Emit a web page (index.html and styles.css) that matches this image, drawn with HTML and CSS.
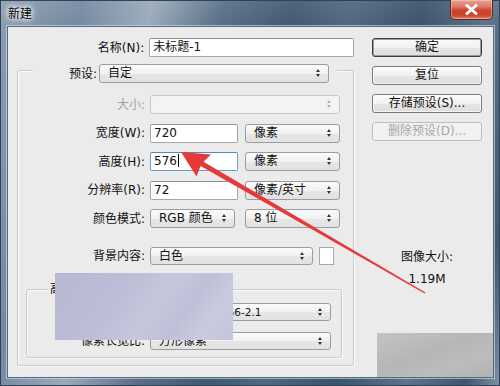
FILE: index.html
```html
<!DOCTYPE html>
<html lang="zh-CN">
<head>
<meta charset="utf-8">
<title>新建</title>
<link rel="stylesheet" href="styles.css">
</head>
<body>
<div class="window">
  <div class="titlebar">
    <span class="title">新建</span>
    <div class="close">
      <svg width="13" height="11" viewBox="0 0 13 11"><path d="M2 1.5 L11 9.5 M11 1.5 L2 9.5" stroke="#fff" stroke-width="3" stroke-linecap="round"/></svg>
    </div>
  </div>
  <div class="client">
    <div class="left">
      <div class="row name-row">
        <span class="lbl">名称(N):</span>
        <div class="input w-name">未标题-1</div>
      </div>
      <div class="group">
        <div class="legend">
          <span class="lbl lbl-legend">预设:</span>
          <div class="select w-preset">自定</div>
        </div>
        <div class="rows">
          <div class="row">
            <span class="lbl disabled">大小:</span>
            <div class="select is-disabled w-size"></div>
          </div>
          <div class="row">
            <span class="lbl">宽度(W):</span>
            <div class="input w-num">720</div>
            <div class="select w-unit">像素</div>
          </div>
          <div class="row">
            <span class="lbl">高度(H):</span>
            <div class="input w-num focused">576<span class="caret"></span></div>
            <div class="select w-unit">像素</div>
          </div>
          <div class="row">
            <span class="lbl">分辨率(R):</span>
            <div class="input w-num">72</div>
            <div class="select w-unit">像素/英寸</div>
          </div>
          <div class="row">
            <span class="lbl">颜色模式:</span>
            <div class="select w-mode">RGB 颜色</div>
            <div class="select w-unit">8 位</div>
          </div>
          <div class="row row-bg">
            <span class="lbl">背景内容:</span>
            <div class="select w-bg">白色</div>
            <div class="swatch"></div>
          </div>
        </div>
        <div class="subgroup">
          <div class="sublegend">高级</div>
          <div class="subrows">
            <div class="row row-sub">
              <span class="lbl lbl-sub">颜色配置文件:</span>
              <div class="select w-sub narrow">sRGB IEC61966-2.1</div>
            </div>
            <div class="row row-sub">
              <span class="lbl lbl-sub">像素长宽比:</span>
              <div class="select w-sub">方形像素</div>
            </div>
          </div>
        </div>
      </div>
    </div>
    <div class="right">
      <div class="btn default">确定</div>
      <div class="btn">复位</div>
      <div class="btn">存储预设(S)...</div>
      <div class="btn is-disabled">删除预设(D)...</div>
      <div class="info">
        <div>图像大小:</div>
        <div class="info-val">1.19M</div>
      </div>
    </div>
    <div class="blur blur-a"></div>
    <div class="blur blur-b"></div>
  </div>
  <svg class="arrow" width="500" height="386" viewBox="0 0 500 386">
    <polygon fill="#e63a3a" points="181,152 211,154.5 203.5,161.8 425.4,292.4 424.6,293.6 200.6,165.9 196.5,176.5"/>
  </svg>
</div>
</body>
</html>
```
FILE: styles.css
```css
* { box-sizing: border-box; margin: 0; padding: 0; }
html, body { width: 500px; height: 386px; overflow: hidden; }
body {
  font-family: "DejaVu Sans", "Noto Sans CJK SC", sans-serif;
  font-size: 12px;
  color: #111;
  background: #3b526b;
}
.window {
  position: relative;
  width: 500px;
  height: 386px;
  display: flex;
  flex-direction: column;
  background:
    linear-gradient(180deg, rgba(255,255,255,0.08) 0px, rgba(255,255,255,0) 27px),
    linear-gradient(103deg, #8d9fb1 0%, #7488a0 14%, #9aabbb 26%, #596f87 38%, #41596f 50%, #4f6880 60%, #3a526b 72%, #5d738a 84%, #3f566f 94%, #7f92a6 100%);
  box-shadow: inset 0 0 0 1px #2f4258;
}
.titlebar {
  height: 27px;
  display: flex;
  justify-content: space-between;
  align-items: flex-start;
  padding: 0 7px 0 8px;
}
.title {
  margin-top: 5px;
  font-family: "Noto Sans CJK SC", sans-serif;
  font-size: 12px;
  line-height: 16px;
  color: #000;
  text-shadow: 0 0 4px #fff, 0 0 6px #fff, 0 0 8px rgba(255,255,255,0.9);
}
.close {
  width: 43px;
  height: 20px;
  display: flex;
  align-items: center;
  justify-content: center;
  border: 1px solid #5a2a22;
  border-top: none;
  border-radius: 0 0 5px 5px;
  background: linear-gradient(180deg, #e9a292 0%, #dc7a66 35%, #c8432d 55%, #c9452f 80%, #e0806a 100%);
  box-shadow: inset 0 0 0 1px rgba(255,220,210,0.45);
}
.client {
  flex: 1;
  margin: 0 7px 9px 8px;
  position: relative;
  display: flex;
  background: #ebebeb;
  box-shadow: 0 0 0 1px #566a80, 0 0 0 2px rgba(220,228,236,0.6);
}
.left { width: 346px; padding-top: 11px; }
.row { display: flex; align-items: center; height: 19px; }
.lbl {
  width: 137px;
  margin-right: 5px;
  text-align: right;
  white-space: nowrap;
  line-height: 16px;
}
.disabled { color: #a3a3a3; }
.input {
  height: 19px;
  line-height: 17px;
  padding-left: 3px;
  background: #fff;
  border: 1px solid #a5a7ad;
  border-top-color: #8e9096;
  border-radius: 2px;
  white-space: nowrap;
}
.input.focused { border-color: #6d9ccd; border-top-color: #5a87b8; }
.caret { display: inline-block; width: 1px; height: 13px; margin-left: 1px; background: #000; vertical-align: -2px; }
.w-name { width: 206px; }
.select {
  position: relative;
  height: 19px;
  line-height: 17px;
  padding-left: 8px;
  border: 1px solid #9c9c9c;
  border-radius: 3px;
  background: linear-gradient(180deg, #fbfbfb 0%, #f1f1f1 50%, #e6e6e6 51%, #e2e2e2 100%);
  white-space: nowrap;
  overflow: hidden;
}
.select::before, .select::after {
  content: "";
  position: absolute;
  right: 8px;
  width: 0; height: 0;
  border-left: 2.5px solid transparent;
  border-right: 2.5px solid transparent;
}
.select::before { top: 4px; border-bottom: 3.5px solid #333; }
.select::after { top: 9px; border-top: 3.5px solid #333; }
.select.is-disabled { background: #f3f3f3; border-color: #c6c6c6; }
.select.is-disabled::before { border-bottom-color: #b0b0b0; }
.select.is-disabled::after { border-top-color: #b0b0b0; }
.group {
  margin: 13px 0 0 9px;
  width: 337px;
  height: 296px;
  border: 1px solid #cbcbcb;
  border-radius: 3px;
  box-shadow: inset 1px 1px 0 #fafafa, 1px 1px 0 #fafafa;
}
.legend {
  display: flex;
  align-items: center;
  width: fit-content;
  margin: -7px 0 0 15px;
  padding-right: 8px;
  background: #ebebeb;
}
.lbl-legend { width: 64px; margin-right: 2px; }
.w-preset { width: 230px; }
.rows {
  margin-top: 12px;
  display: flex;
  flex-direction: column;
  gap: 9.5px;
}
.rows .lbl { width: 127px; }
.w-size { width: 190px; }
.w-num { width: 88px; margin-right: 7px; }
.w-unit { width: 95px; }
.w-mode { width: 85px; margin-right: 10px; }
.row-bg { margin-top: 9px; height: 18px; }
.w-bg { width: 163px; height: 18px; }
.swatch { width: 15px; height: 18px; margin-left: 6px; background: #fff; border: 1px solid #a9a9a9; }
.subgroup {
  margin: 24px 0 0 8px;
  width: 316px;
  height: 69px;
  border: 1px solid #cbcbcb;
  border-radius: 3px;
  box-shadow: inset 1px 1px 0 #fafafa, 1px 1px 0 #fafafa;
}
.sublegend {
  width: fit-content;
  margin: -8px 0 0 21px;
  padding: 0 2px;
  line-height: 15px;
  background: #ebebeb;
}
.subrows { margin-top: 6px; display: flex; flex-direction: column; gap: 11px; }
.row-sub { height: 18px; }
.lbl-sub { width: 118px !important; }
.w-sub { width: 181px; height: 18px; }
.narrow { font-size: 10.5px; }
.right {
  width: 110px;
  margin-left: 18px;
  padding-top: 11px;
  display: flex;
  flex-direction: column;
  gap: 9px;
}
.btn {
  height: 19px;
  line-height: 17px;
  text-align: center;
  white-space: nowrap;
  border: 1px solid #7a7a7a;
  border-radius: 3px;
  background: linear-gradient(180deg, #fbfbfb 0%, #f1f1f1 50%, #e5e5e5 51%, #dedede 100%);
  box-shadow: inset 0 0 0 1px rgba(255,255,255,0.7);
}
.btn.default { border-color: #3c3c3c; box-shadow: inset 0 0 0 1px #9a9a9a; }
.btn.is-disabled { color: #a6a6a6; border-color: #bdbdbd; background: #f2f2f2; box-shadow: none; }
.info { margin-top: 99px; text-align: center; line-height: 16px; }
.info-val { margin-top: 6px; }
.blur { position: absolute; }
.blur-a {
  left: 47px; top: 246px; width: 178px; height: 67px;
  background: linear-gradient(125deg, #b8b8d4 0%, #bdbdd7 35%, #c6c6dc 55%, #bfbfd8 70%, #cacadf 85%, #c4c4da 100%);
}
.blur-b {
  left: 369px; top: 306px; width: 116px; height: 44px;
  background: linear-gradient(160deg, #c3c3c3 0%, #b6b6b6 45%, #bcbcbc 70%, #b3b3b3 100%);
}
.arrow { position: absolute; left: 0; top: 0; pointer-events: none; }
```
